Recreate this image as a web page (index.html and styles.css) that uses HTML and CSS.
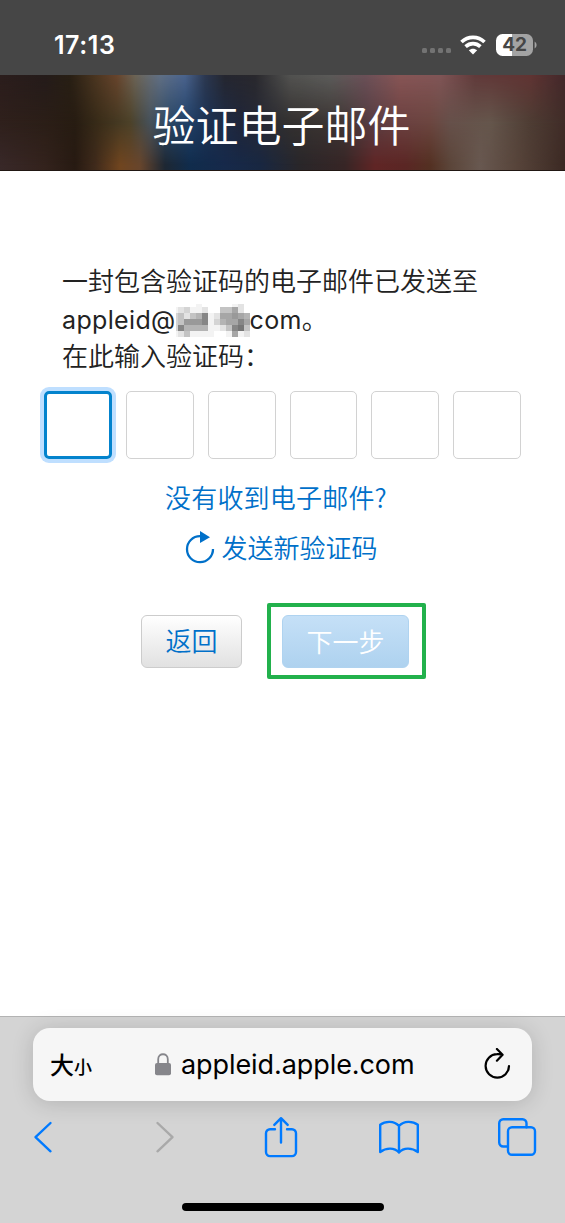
FILE: index.html
```
<!DOCTYPE html>
<html lang="zh-CN">
<head>
<meta charset="utf-8">
<title>验证电子邮件</title>
<link rel="stylesheet" href="styles.css">
</head>
<body>
<div class="phone">
  <div class="status">
    <span class="time">17:13</span>
    <span class="dots"><i></i><i></i><i></i><i></i></span>
    <svg class="wifi" width="26" height="20" viewBox="0 0 26 20" fill="none" stroke="#fff" stroke-width="3.7">
      <path d="M1.5 7C8 .8 18 .8 24.5 7"/>
      <path d="M5.6 11.6C10 7.6 16 7.6 20.4 11.6"/>
      <path d="M13 19.5L8.8 15.3C11.3 13.2 14.7 13.2 17.2 15.3Z" fill="#fff" stroke="none"/>
    </svg>
    <span class="battery">42</span>
    <svg class="cap" width="3" height="8" viewBox="0 0 3 8"><path d="M0.6 0.5C3.2 2 3.2 6 0.6 7.5Z" fill="#a3a3a3"/></svg>
  </div>
  <header class="banner"><h1>验证电子邮件</h1></header>
  <main class="content">
    <p class="message">一封包含验证码的电子邮件已发送至<br><span class="latin">appleid@</span><svg class="mosaic" width="74" height="33" viewBox="0 0 74 33" shape-rendering="crispEdges">
      <path fill="#f3f3f3" d="M0 3h38v30H0zM20 0h6v3h-6zM56 0h6v3h-6zM38 9h36v24H38z"/>
      <path fill="#e3e3e3" d="M2 3h6v6H2zM26 3h6v6h-6zM62 0h6v9h-6zM8 9h6v6H8zM38 9h6v6h-6zM2 27h6v6H2zM44 21h6v6h-6zM68 27h6v6h-6z"/>
      <path fill="#fff" d="M32 0h6v9h-6zM38 27h12v6H38z"/>
      <path fill="#d4d4d4" d="M8 3h6v6H8zM38 15h6v6h-6zM0 9h2v18H0z"/>
      <path fill="#c3c3c3" d="M2 9h6v12H2zM14 9h6v6h-6zM44 3h12v6H44zM8 27h6v6H8zM50 21h6v6h-6zM68 21h6v6h-6z"/>
      <path fill="#b4b4b4" d="M20 9h6v6h-6zM8 21h24v6H8zM44 15h6v6h-6zM68 9h6v6h-6z"/>
      <path fill="#a6a6a6" d="M56 3h6v6h-6zM44 9h12v6H44zM50 15h12v6H50zM62 9h6v6h-6zM68 15h6v6h-6zM56 27h6v6h-6z"/>
      <path fill="#999" d="M8 15h18v6H8zM56 9h6v6h-6z"/>
      <path fill="#868686" d="M2 21h6v6H2zM26 9h6v12h-6zM62 15h6v6h-6zM56 21h6v6h-6z"/>
      <path fill="#767676" d="M62 21h6v6h-6z"/>
    </svg><span class="latin">com</span>。<br>在此输入验证码：</p>
    <div class="codes"><span class="code active"></span><span class="code"></span><span class="code"></span><span class="code"></span><span class="code"></span><span class="code"></span></div>
    <a class="link">没有收到电子邮件?</a>
    <a class="link resend">
      <svg width="30" height="34" viewBox="0 0 30 34"><path d="M15 6.2A13 13 0 1 0 28 19" fill="none" stroke="#0070c9" stroke-width="2.3"/><path d="M15 1L25 7.2L15 13Z" fill="#0070c9"/></svg>
      <span>发送新验证码</span>
    </a>
    <div class="actions">
      <button class="btn">返回</button>
      <div class="highlight"><button class="btn next">下一步</button></div>
    </div>
  </main>
  <footer class="browser">
    <div class="address">
      <span class="size">大<small>小</small></span>
      <span class="domain"><svg width="16" height="23" viewBox="0 0 16 23"><path d="M3.2 11V6.2C3.2-.4 12.8-.4 12.8 6.2V11" fill="none" stroke="#86868b" stroke-width="1.8"/><rect y="10" width="16" height="12.3" rx="2" fill="#86868b"/></svg><b>appleid.apple.com</b></span>
      <svg class="reload" width="28" height="34" viewBox="0 0 28 34" fill="none" stroke="#000" stroke-width="2.2" stroke-linecap="round" stroke-linejoin="round"><path d="M19.2 6.8C17.6 6.2 15.8 6 14 6.2A11.7 11.7 0 1 0 26 18M13.9 1L19.6 6.7L13.9 12.7"/></svg>
    </div>
    <nav class="tools">
      <svg class="back" width="20" height="34" viewBox="0 0 20 34"><path d="M17.5 3L2.5 17.2L17.5 31.3" stroke="#007aff"/></svg>
      <svg class="forward" width="20" height="34" viewBox="0 0 20 34"><path d="M2.5 3L17.5 17.2L2.5 31.3" stroke="#a9a9a9"/></svg>
      <svg class="share" width="34" height="42" viewBox="0 0 34 42" stroke="#007aff"><path d="M11 13.3H6A4 4 0 0 0 2 17.3V36.1A4 4 0 0 0 6 40.1H28A4 4 0 0 0 32 36.1V17.3A4 4 0 0 0 28 13.3H23M17 26.5V2.2M10.3 8.9L17 2.2L23.7 8.9"/></svg>
      <svg class="book" width="42" height="36" viewBox="0 0 42 36" stroke="#007aff"><path d="M21 7C16 1.5 7.3 2 2.2 5.8V33C8 28.5 16.5 28.3 21 33.5C25.5 28.3 34 28.5 39.8 33V5.8C34.7 2 26 1.5 21 7ZM21 7V33.5"/></svg>
      <svg width="40" height="40" viewBox="0 0 40 40" stroke="#007aff"><path d="M10.5 29.5H6.2A4 4 0 0 1 2.2 25.5V6.2A4 4 0 0 1 6.2 2.2H25.5A4 4 0 0 1 29.5 6.2V10.2"/><rect x="11" y="10.2" width="27" height="27.5" rx="4"/></svg>
    </nav>
    <div class="home"></div>
  </footer>
</div>
</body>
</html>
```
FILE: styles.css
```
* { box-sizing: border-box; }
body { margin: 0; font-family: Inter, "Noto Sans CJK SC", sans-serif; color: #222; }
svg { display: block; flex: none; }
.phone { width: 565px; height: 1223px; display: flex; flex-direction: column; background: #fff; overflow: hidden; }

.status { height: 75px; flex: none; display: flex; background: #464646; padding: 14px 28px 0 54px; align-items: center; color: #fff; }
.time { font-size: 25px; font-weight: 600; letter-spacing: .55px; flex: 1; }
.dots { display: flex; gap: 3px; margin: 12px 9px 0 0; }
.dots i { width: 5px; height: 5px; border-radius: 1.5px; background: #737373; }
.wifi { margin-right: 10px; }
.battery { width: 37px; height: 22px; border-radius: 6.5px; background: linear-gradient(90deg, #fff 42%, #a3a3a3 42%); color: #464646; font-size: 19px; line-height: 22px; font-weight: 700; text-align: center; letter-spacing: -.2px; }
.cap { margin-left: 1px; }

/* Blurred artwork: three colour bands that fade into one another vertically. */
.banner { height: 96px; flex: none; position: relative; border-bottom: 1px solid #211713;
  background: linear-gradient(90deg, #2f201c 0, #2b1e17 45px, #271c12 75px, #3a2d19 100px, #4c4128 130px, #46515a 150px, #2a4766 170px, #203f66 190px, #1c3050 210px, #20263a 240px, #33302f 290px, #3e3634 340px, #563c41 370px, #6b4040 400px, #6c4640 430px, #66504a 450px, #65564c 490px, #4e3d34 530px, #402c27 565px); }
.banner::before, .banner::after { content: ""; position: absolute; inset: 0; }
.banner::before {
  background: linear-gradient(90deg, #2b1d1c 0, #241b1a 45px, #281f14 70px, #4a3520 95px, #67442c 117px, #6b6355 135px, #606f84 160px, #4a638d 185px, #2c3850 205px, #25262f 225px, #29282d 255px, #525250 290px, #5b5b59 330px, #6a5057 365px, #875555 400px, #805556 440px, #603a3a 475px, #603433 530px, #42282a 565px);
  mask-image: linear-gradient(#000, transparent 50%); }
.banner::after {
  background: linear-gradient(90deg, #382828 0, #33221c 45px, #271a12 75px, #3f2a1b 95px, #70451f 120px, #67452c 140px, #1d2733 165px, #102c4c 190px, #16294a 225px, #182741 260px, #292629 300px, #372525 345px, #602525 375px, #5a2624 405px, #533022 430px, #5b4539 450px, #685850 480px, #58453b 515px, #3b2923 565px);
  mask-image: linear-gradient(transparent 50%, #000 95%); }
h1 { position: relative; z-index: 1; margin: 0; padding-right: 2px; text-align: center; color: #fff; font: 350 43px/97px "Noto Sans CJK SC", sans-serif; }

.content { flex: 1; display: flex; flex-direction: column; align-items: center; }
.message { align-self: flex-start; margin: 90px 0 0 62px; height: 113px; font: 350 26px/37.5px "Noto Sans CJK SC", sans-serif; white-space: nowrap; }
.latin { font-family: Inter, sans-serif; font-weight: 400; font-size: 25px; letter-spacing: .35px; line-height: 1; }
.mosaic { display: inline-block; vertical-align: -2px; margin: -12px 0 -6px; }
.codes { display: flex; gap: 14px; margin: 17px 0 0; }
.code { width: 67.8px; height: 68px; border: 1.5px solid #d2d2d2; border-radius: 5px; }
.active { border: 3px solid #0383cd; box-shadow: 0 0 0 4px #bfdfff; }
.link { color: #0070c9; font: 350 26px/38px "Noto Sans CJK SC", sans-serif; letter-spacing: .2px; margin: 19px 13px 0 0; }
.resend { display: flex; gap: 6px; margin: 12px 2px 0 0; align-items: center; letter-spacing: 0; }
.actions { display: flex; gap: 25px; margin: 37px 0 0 2px; align-items: center; }
.btn { width: 101px; height: 53px; padding: 0 0 2px; border: 1.5px solid #ccc; border-radius: 6px; background: linear-gradient(#fff, #e1e1e1); color: #0070c9; font: 350 26px/1 "Noto Sans CJK SC", sans-serif; }
.highlight { border: 4px solid #22b14c; border-radius: 2px; padding: 8px 13px 7px 11px; width: 159px; height: 76px; display: flex; }
.next { width: 127px; color: #fff; border-color: #afd3f0; background: linear-gradient(#c5e0f7, #aed2ef); }

.browser { height: 207px; flex: none; border-top: 1px solid #b3b3b3; background: #d4d4d4; padding: 11px 28px 0 33px; display: flex; flex-direction: column; }
.address { height: 73px; width: 499px; flex: none; display: flex; align-items: center; background: #f6f6f6; border-radius: 17px; padding: 0 21px 0 17px; box-shadow: 0 2px 22px rgba(0,0,0,.16); color: #000; }
.size { font: 500 24px/30px "Noto Sans CJK SC", sans-serif; width: 105px; white-space: nowrap; }
.size small { font-size: 18px; }
.domain { display: flex; gap: 10px; align-items: center; }
.domain b { font-weight: 400; font-size: 27px; letter-spacing: -.08px; }
.reload { margin-left: auto; }
.tools { display: flex; align-items: center; height: 72px; }
.tools path, .tools rect { fill: none; stroke-width: 2.4; stroke-linecap: round; stroke-linejoin: round; }
.back { margin-right: 102px; }
.forward { margin-right: 89px; }
.share { margin-right: 80px; }
.book { margin-right: 77px; }
.home { width: 202px; height: 8px; border-radius: 4px; background: #000; margin: 30px 0 0 149px; }
```
